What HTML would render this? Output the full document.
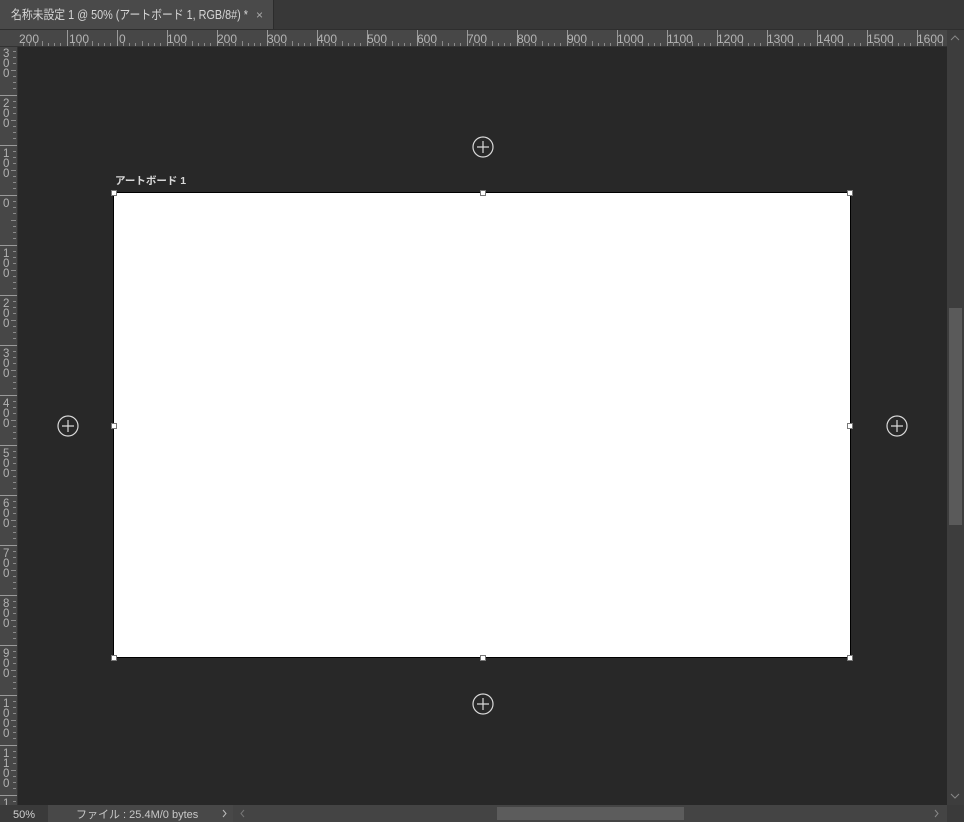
<!DOCTYPE html>
<html><head><meta charset="utf-8"><style>
html,body{margin:0;padding:0;width:964px;height:822px;overflow:hidden;background:#282828;font-family:"Liberation Sans","Noto Sans CJK JP",sans-serif}
</style></head><body>
<svg width="964" height="822" xmlns="http://www.w3.org/2000/svg" style="display:block">
<defs>
<pattern id="hm" x="17" y="30" width="50" height="17" patternUnits="userSpaceOnUse">
<rect x="0" y="0" width="1" height="17" fill="#9a9a9a"/>
<rect x="6" y="13" width="1" height="3" fill="#8a8a8a"/><rect x="12" y="13" width="1" height="3" fill="#8a8a8a"/><rect x="18" y="13" width="1" height="3" fill="#8a8a8a"/><rect x="25" y="11" width="1" height="5" fill="#8a8a8a"/><rect x="31" y="13" width="1" height="3" fill="#8a8a8a"/><rect x="37" y="13" width="1" height="3" fill="#8a8a8a"/><rect x="43" y="13" width="1" height="3" fill="#8a8a8a"/>
</pattern>
<pattern id="vm" x="0" y="-5" width="17" height="50" patternUnits="userSpaceOnUse">
<rect x="0" y="0" width="17" height="1" fill="#9a9a9a"/>
<rect x="13" y="6" width="3" height="1" fill="#8a8a8a"/><rect x="13" y="12" width="3" height="1" fill="#8a8a8a"/><rect x="13" y="18" width="3" height="1" fill="#8a8a8a"/><rect x="11" y="25" width="5" height="1" fill="#8a8a8a"/><rect x="13" y="31" width="3" height="1" fill="#8a8a8a"/><rect x="13" y="37" width="3" height="1" fill="#8a8a8a"/><rect x="13" y="43" width="3" height="1" fill="#8a8a8a"/>
</pattern>
</defs>
<rect width="964" height="822" fill="#282828"/>
<!-- tab bar -->
<rect x="0" y="0" width="964" height="29" fill="#383838"/>
<rect x="0" y="0" width="273" height="29" fill="#4a4a4a"/>
<rect x="273" y="0" width="1" height="29" fill="#2c2c2c"/>
<rect x="0" y="29" width="964" height="1" fill="#2e2e2e"/>
<text x="11" y="19" font-size="12.5" fill="#d6d6d6" textLength="237" lengthAdjust="spacingAndGlyphs">名称未設定 1 @ 50% (アートボード 1, RGB/8#) *</text>
<text x="256" y="19" font-size="12" fill="#aaa">×</text>
<!-- rulers -->
<rect x="0" y="30" width="947" height="17" fill="#474747"/>
<rect x="0" y="30" width="18" height="775" fill="#474747"/>
<rect x="18" y="30" width="929" height="17" fill="url(#hm)"/>
<rect x="0" y="47" width="17" height="758" fill="url(#vm)"/>
<rect x="17" y="47" width="1" height="758" fill="#333"/>
<rect x="0" y="46" width="947" height="1" fill="#333"/>
<g font-size="12" fill="#b4b4b4">
<text x="19" y="43">200</text><text x="69" y="43">100</text><text x="119" y="43">0</text><text x="167" y="43">100</text><text x="217" y="43">200</text><text x="267" y="43">300</text><text x="317" y="43">400</text><text x="367" y="43">500</text><text x="417" y="43">600</text><text x="467" y="43">700</text><text x="517" y="43">800</text><text x="567" y="43">900</text><text x="617" y="43">1000</text><text x="667" y="43">1100</text><text x="717" y="43">1200</text><text x="767" y="43">1300</text><text x="817" y="43">1400</text><text x="867" y="43">1500</text><text x="917" y="43">1600</text>
</g>
<g font-size="11.5" fill="#b4b4b4">
<text x="3" y="57">3</text><text x="3" y="67">0</text><text x="3" y="77">0</text>
<text x="3" y="107">2</text><text x="3" y="117">0</text><text x="3" y="127">0</text>
<text x="3" y="157">1</text><text x="3" y="167">0</text><text x="3" y="177">0</text>
<text x="3" y="207">0</text>
<text x="3" y="257">1</text><text x="3" y="267">0</text><text x="3" y="277">0</text>
<text x="3" y="307">2</text><text x="3" y="317">0</text><text x="3" y="327">0</text>
<text x="3" y="357">3</text><text x="3" y="367">0</text><text x="3" y="377">0</text>
<text x="3" y="407">4</text><text x="3" y="417">0</text><text x="3" y="427">0</text>
<text x="3" y="457">5</text><text x="3" y="467">0</text><text x="3" y="477">0</text>
<text x="3" y="507">6</text><text x="3" y="517">0</text><text x="3" y="527">0</text>
<text x="3" y="557">7</text><text x="3" y="567">0</text><text x="3" y="577">0</text>
<text x="3" y="607">8</text><text x="3" y="617">0</text><text x="3" y="627">0</text>
<text x="3" y="657">9</text><text x="3" y="667">0</text><text x="3" y="677">0</text>
<text x="3" y="707">1</text><text x="3" y="717">0</text><text x="3" y="727">0</text><text x="3" y="737">0</text>
<text x="3" y="757">1</text><text x="3" y="767">1</text><text x="3" y="777">0</text><text x="3" y="787">0</text>
<text x="3" y="807">1</text>
</g>
<!-- scrollbar -->
<rect x="947" y="30" width="17" height="775" fill="#3d3d3d"/>
<rect x="949" y="308" width="13" height="217" fill="#5a5a5a"/>
<path d="M951 40 L955 36 L959 40" stroke="#888" fill="none"/>
<path d="M951 794 L955 798 L959 794" stroke="#888" fill="none"/>
<!-- status bar -->
<rect x="0" y="805" width="964" height="17" fill="#3a3a3a"/>
<rect x="48" y="805" width="185" height="17" fill="#484848"/>
<rect x="233" y="805" width="714" height="17" fill="#444"/>
<rect x="497" y="807" width="187" height="13" fill="#5c5c5c"/>
<text x="13" y="818" font-size="11" fill="#d0d0d0">50%</text>
<text x="76" y="818" font-size="11" fill="#c8c8c8">ファイル : 25.4M/0 bytes</text>
<path d="M223 810 L226 813.5 L223 817" stroke="#bbb" fill="none"/>
<path d="M244 810 L241 813.5 L244 817" stroke="#777" fill="none"/>
<path d="M935 810 L938 813.5 L935 817" stroke="#888" fill="none"/>
<!-- artboard -->
<text x="115" y="184" font-size="10.5" font-weight="bold" fill="#d8d8d8">アートボード 1</text>
<rect x="113.5" y="192.5" width="737" height="465" fill="#fff" stroke="#000"/>
<g fill="#fff" stroke="#777">
<rect x="111.5" y="190.5" width="5" height="5"/><rect x="480.5" y="190.5" width="5" height="5"/><rect x="847.5" y="190.5" width="5" height="5"/>
<rect x="111.5" y="423.5" width="5" height="5"/><rect x="847.5" y="423.5" width="5" height="5"/>
<rect x="111.5" y="655.5" width="5" height="5"/><rect x="480.5" y="655.5" width="5" height="5"/><rect x="847.5" y="655.5" width="5" height="5"/>
</g>
<g stroke="#d8d8d8" fill="none" stroke-width="1.2">
<circle cx="483" cy="147" r="10"/><path d="M477 147h12M483 141v12"/>
<circle cx="68" cy="426" r="10"/><path d="M62 426h12M68 420v12"/>
<circle cx="897" cy="426" r="10"/><path d="M891 426h12M897 420v12"/>
<circle cx="483" cy="704" r="10"/><path d="M477 704h12M483 698v12"/>
</g>
</svg>
</body></html>
